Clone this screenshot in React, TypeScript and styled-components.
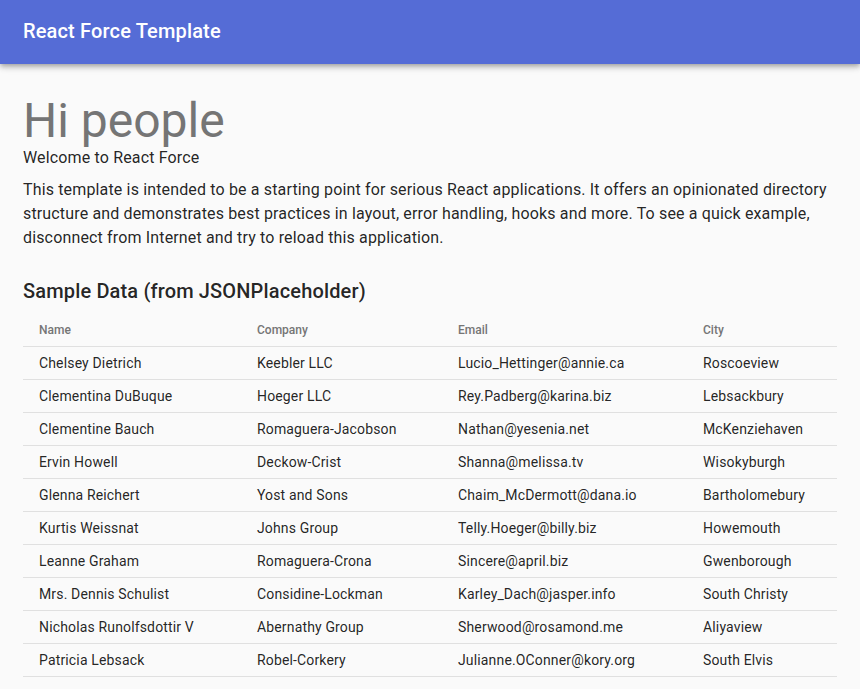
import React from "react";
import styled, { createGlobalStyle } from "styled-components";

const Global = createGlobalStyle`
  html, body { margin: 0; padding: 0; background: #fafafa; }
  body { font-family: Roboto, "Liberation Sans", Arial, sans-serif; color: rgba(0,0,0,0.87); }
  * { box-sizing: border-box; }
`;

const AppBar = styled.header`
  height: 64px;
  background: #556cd6;
  color: #fff;
  display: flex;
  align-items: center;
  padding: 0 24px 2px 23px;
  box-shadow: 0px 2px 4px -1px rgba(0,0,0,0.2), 0px 4px 5px 0px rgba(0,0,0,0.14), 0px 1px 10px 0px rgba(0,0,0,0.12);
  position: relative;
  z-index: 1;
`;

const Title = styled.h1`
  margin: 0;
  font-size: 20px;
  font-weight: 500;
  letter-spacing: 0.15px;
  line-height: 32px;
`;

const Main = styled.main`
  padding: 32px 23px 0 23px;
`;

const Hero = styled.h2`
  margin: 0;
  font-size: 48px;
  font-weight: 400;
  line-height: 50px;
  color: #757575;
`;

const Subtitle = styled.p`
  margin: 0 0 8px 0;
  font-size: 16px;
  line-height: 24px;
  letter-spacing: 0.15px;
`;

const Body = styled.p`
  margin: 0 0 25px 0;
  font-size: 16px;
  line-height: 24px;
  letter-spacing: 0.15px;
`;

const SectionTitle = styled.h3`
  margin: 0 0 7px 0;
  font-size: 20px;
  font-weight: 500;
  line-height: 32px;
  letter-spacing: 0.15px;
`;

const Table = styled.table`
  width: 100%;
  border-collapse: collapse;
  table-layout: fixed;
`;

const HeadCell = styled.th<{ $w: number }>`
  width: ${(p) => p.$w}px;
  text-align: left;
  font-size: 12px;
  font-weight: 500;
  color: #757575;
  line-height: 20px;
  padding: 6px 16px;
  border-bottom: 1px solid #e0e0e0;
`;

const Cell = styled.td`
  font-size: 14px;
  font-weight: 400;
  line-height: 20px;
  letter-spacing: 0.15px;
  padding: 6px 16px;
  border-bottom: 1px solid #e0e0e0;
  white-space: nowrap;
`;

const rows = [
  ["Chelsey Dietrich", "Keebler LLC", "Lucio_Hettinger@annie.ca", "Roscoeview"],
  ["Clementina DuBuque", "Hoeger LLC", "Rey.Padberg@karina.biz", "Lebsackbury"],
  ["Clementine Bauch", "Romaguera-Jacobson", "Nathan@yesenia.net", "McKenziehaven"],
  ["Ervin Howell", "Deckow-Crist", "Shanna@melissa.tv", "Wisokyburgh"],
  ["Glenna Reichert", "Yost and Sons", "Chaim_McDermott@dana.io", "Bartholomebury"],
  ["Kurtis Weissnat", "Johns Group", "Telly.Hoeger@billy.biz", "Howemouth"],
  ["Leanne Graham", "Romaguera-Crona", "Sincere@april.biz", "Gwenborough"],
  ["Mrs. Dennis Schulist", "Considine-Lockman", "Karley_Dach@jasper.info", "South Christy"],
  ["Nicholas Runolfsdottir V", "Abernathy Group", "Sherwood@rosamond.me", "Aliyaview"],
  ["Patricia Lebsack", "Robel-Corkery", "Julianne.OConner@kory.org", "South Elvis"],
];

const cols: [string, number][] = [
  ["Name", 218],
  ["Company", 201],
  ["Email", 245],
  ["City", 150],
];

export default function App() {
  return (
    <>
      <Global />
      <AppBar>
        <Title>React Force Template</Title>
      </AppBar>
      <Main>
        <Hero>Hi people</Hero>
        <Subtitle>Welcome to React Force</Subtitle>
        <Body>
          This template is intended to be a starting point for serious React applications. It offers an opinionated
          directory structure and demonstrates best practices in layout, error handling, hooks and more. To see a quick
          example, disconnect from Internet and try to reload this application.
        </Body>
        <SectionTitle>Sample Data (from JSONPlaceholder)</SectionTitle>
        <Table>
          <thead>
            <tr>
              {cols.map(([c, w]) => (
                <HeadCell key={c} $w={w}>{c}</HeadCell>
              ))}
            </tr>
          </thead>
          <tbody>
            {rows.map((r) => (
              <tr key={r[0]}>
                {r.map((v, i) => (
                  <Cell key={i}>{v}</Cell>
                ))}
              </tr>
            ))}
          </tbody>
        </Table>
      </Main>
    </>
  );
}
